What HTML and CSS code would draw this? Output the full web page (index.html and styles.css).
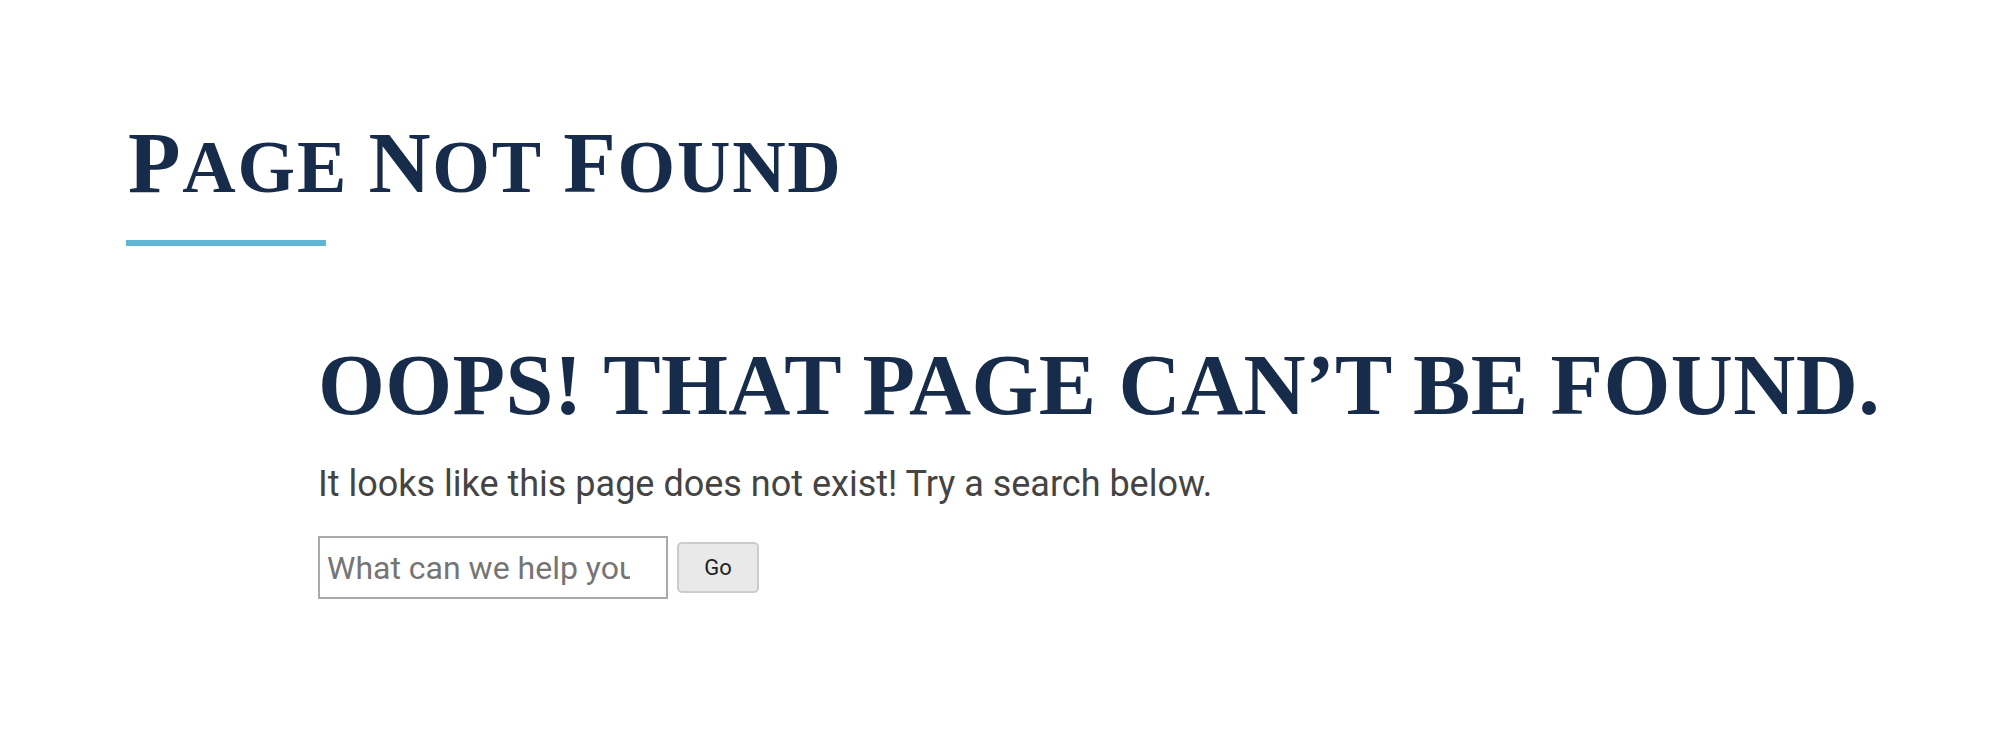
FILE: index.html
```html
<!DOCTYPE html>
<html lang="en">
<head>
  <meta charset="UTF-8">
  <meta name="viewport" content="width=device-width, initial-scale=1.0">
  <title>Page Not Found</title>
  <link rel="stylesheet" href="styles.css">
</head>
<body>
  <!-- Page header -->
  <header class="page-header">
    <h1 class="page-title"><span class="word">Page</span> <span class="word">Not</span> <span class="word">Found</span></h1>
    <div class="title-rule"></div>
  </header>

  <!-- 404 content -->
  <main class="content">
    <h2 class="error-title">Oops! That page can&rsquo;t be found.</h2>
    <p class="error-text">It looks like this page does not exist! Try a search below.</p>
    <form class="search-form" onsubmit="return false;">
      <input type="text" class="search-field" placeholder="What can we help you find?">
      <button type="submit" class="search-button">Go</button>
    </form>
  </main>
</body>
</html>
```
FILE: styles.css
```css
/* Base */
body {
  margin: 0;
  background: #fff;
  font-family: 'Roboto', 'Liberation Sans', sans-serif;
  color: #444;
}

/* Header with small caps title */
.page-header {
  padding: 120px 128px 0;
}

.page-title {
  margin: 0;
  font-family: 'Liberation Serif', serif;
  font-weight: bold;
  font-size: 74px;
  line-height: 1;
  letter-spacing: 1.8px;
  text-transform: uppercase;
  color: #172b4a;
}

.page-title .word {
  display: inline-block;
}

.page-title .word::first-letter {
  font-size: 86px;
}

.title-rule {
  width: 200px;
  height: 6px;
  margin-top: 34px;
  margin-left: -2px;
  background: #5fb5d3;
}

/* Error message */
.content {
  padding-left: 318px;
}

.error-title {
  margin: 96px 0 0;
  font-family: 'Liberation Serif', serif;
  font-weight: bold;
  font-size: 86px;
  line-height: 1;
  letter-spacing: 0.4px;
  text-transform: uppercase;
  color: #172b4a;
}

.error-text {
  margin: 29px 0 0;
  font-size: 36px;
  line-height: 1.5;
  color: #444;
}

/* Search form */
.search-form {
  display: flex;
  align-items: center;
  gap: 9px;
  margin-top: 25px;
}

.search-field {
  box-sizing: border-box;
  width: 350px;
  height: 63px;
  padding: 0 36px 0 7px;
  border: 2px solid #aaa;
  border-radius: 0;
  font-family: 'Roboto', sans-serif;
  font-size: 32px;
  color: #333;
  outline: none;
}

.search-field::placeholder {
  color: #757575;
}

.search-button {
  box-sizing: border-box;
  width: 82px;
  height: 51px;
  border: 2px solid #ccc;
  border-radius: 5px;
  background: #e9e9e9;
  font-family: 'Roboto', sans-serif;
  font-size: 22px;
  color: #222;
  cursor: pointer;
}
```
